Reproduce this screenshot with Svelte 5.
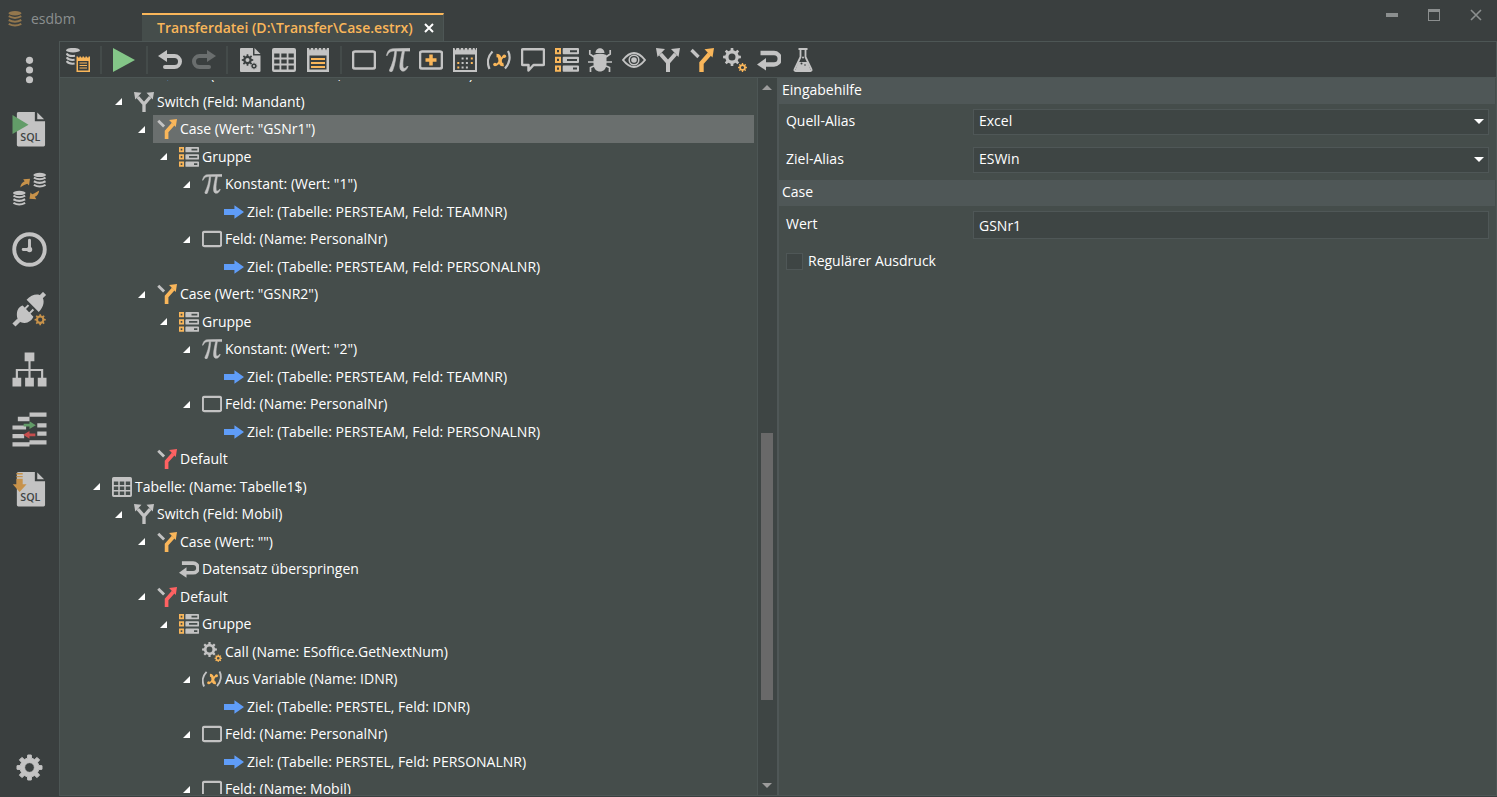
<script>
  // Outline of a cog wheel with a round hole, for evenodd filling
  function gear(cx, cy, outer, inner, hole, teeth = 8) {
    const step = (Math.PI * 2) / teeth;
    const at = (r, a) => `${(cx + r * Math.cos(a)).toFixed(2)} ${(cy + r * Math.sin(a)).toFixed(2)}`;
    const points = [];
    for (let i = 0; i < teeth; i++) {
      const a = i * step - Math.PI / 2;
      points.push(at(inner, a - step * 0.27), at(outer, a - step * 0.18), at(outer, a + step * 0.18), at(inner, a + step * 0.27));
    }
    return `M${points.join('L')}Z M${cx - hole} ${cy}a${hole} ${hole} 0 1 0 ${hole * 2} 0a${hole} ${hole} 0 1 0 ${-hole * 2} 0Z`;
  }

  const sidebar = [
    ['dots', 'Menü'],
    ['sqlrun', 'SQL ausführen'],
    ['dbsync', 'Datenbanken abgleichen'],
    ['clock', 'Zeitplan'],
    ['plug', 'Verbindungen'],
    ['tree', 'Struktur'],
    ['compare', 'Vergleich'],
    ['sqlload', 'SQL exportieren']
  ];

  const toolGroups = [
    [['dbnote', 'Transferdatei']],
    [['play', 'Starten']],
    [['undo', 'Rückgängig'], ['redo', 'Wiederholen']],
    [['script', 'Skript'], ['table', 'Tabelle'], ['note', 'Notiz']],
    [
      ['field', 'Feld'], ['pi', 'Konstant'], ['plus', 'Hinzufügen'], ['calendar', 'Datum'], ['variable', 'Variable'],
      ['comment', 'Kommentar'], ['group', 'Gruppe'], ['bug', 'Debug'], ['eye', 'Ansicht'], ['switch', 'Switch'],
      ['case', 'Case'], ['call', 'Call'], ['skip', 'Datensatz überspringen'], ['flask', 'Test']
    ]
  ];

  const nodes = [
    { d: 2, icon: 'target', text: 'Ziel: (Tabelle: PERSTEAM, Feld: PERSONALNR)' },
    { d: 1, icon: 'switch', text: 'Switch (Feld: Mandant)' },
    { d: 2, icon: 'case', text: 'Case (Wert: "GSNr1")' },
    { d: 3, icon: 'group', text: 'Gruppe' },
    { d: 4, icon: 'pi', text: 'Konstant: (Wert: "1")' },
    { d: 5, icon: 'target', text: 'Ziel: (Tabelle: PERSTEAM, Feld: TEAMNR)' },
    { d: 4, icon: 'field', text: 'Feld: (Name: PersonalNr)' },
    { d: 5, icon: 'target', text: 'Ziel: (Tabelle: PERSTEAM, Feld: PERSONALNR)' },
    { d: 2, icon: 'case', text: 'Case (Wert: "GSNR2")' },
    { d: 3, icon: 'group', text: 'Gruppe' },
    { d: 4, icon: 'pi', text: 'Konstant: (Wert: "2")' },
    { d: 5, icon: 'target', text: 'Ziel: (Tabelle: PERSTEAM, Feld: TEAMNR)' },
    { d: 4, icon: 'field', text: 'Feld: (Name: PersonalNr)' },
    { d: 5, icon: 'target', text: 'Ziel: (Tabelle: PERSTEAM, Feld: PERSONALNR)' },
    { d: 2, icon: 'default', text: 'Default' },
    { d: 0, icon: 'table', text: 'Tabelle: (Name: Tabelle1$)' },
    { d: 1, icon: 'switch', text: 'Switch (Feld: Mobil)' },
    { d: 2, icon: 'case', text: 'Case (Wert: "")' },
    { d: 3, icon: 'skip', text: 'Datensatz überspringen', leaf: true },
    { d: 2, icon: 'default', text: 'Default' },
    { d: 3, icon: 'group', text: 'Gruppe' },
    { d: 4, icon: 'call', text: 'Call (Name: ESoffice.GetNextNum)' },
    { d: 4, icon: 'variable', text: 'Aus Variable (Name: IDNR)' },
    { d: 5, icon: 'target', text: 'Ziel: (Tabelle: PERSTEL, Feld: IDNR)' },
    { d: 4, icon: 'field', text: 'Feld: (Name: PersonalNr)' },
    { d: 5, icon: 'target', text: 'Ziel: (Tabelle: PERSTEL, Feld: PERSONALNR)' },
    { d: 4, icon: 'field', text: 'Feld: (Name: Mobil)', parent: true }
  ];

  let selected = $state(2);
  let collapsed = $state({});
  let source = $state('Excel');
  let target = $state('ESWin');
  let value = $state('GSNr1');
  let regex = $state(false);

  const hasChildren = (i) => nodes[i].parent || (i + 1 < nodes.length && nodes[i + 1].d > nodes[i].d);

  const visible = $derived.by(() => {
    const out = [];
    let hide = Infinity;
    nodes.forEach((n, i) => {
      if (n.d > hide) return;
      hide = collapsed[i] ? n.d : Infinity;
      out.push({ ...n, i, parent: hasChildren(i) });
    });
    return out;
  });

  const indent = (d) => 31 + Math.floor(d * 22.5);
</script>

{#snippet icon(name)}
  <svg class="ic" viewBox="0 0 24 24" aria-hidden="true">
    {#if name === 'dbnote'}
      <ellipse class="g" cx="7" cy="2.2" rx="6.8" ry="2.3" />
      <path class="gs" stroke-width="2" d="M.6 5.5C2 8 6 8.300 9 7.800M.6 9.300c1.400 2.300 4 3 8 2.500M.6 13.100c1.400 2.300 4 3 8 2.500" />
      <path class="o" fill-rule="evenodd" d="M10.500 10V8.500h1.500v1h1.500v-1h1.500v1h1.500v-1H18v1h1.500v-1H21v1h1.500v-1H24V24H10.500ZM12 13v9.500h10.500V13Z" />
      <path class="os" stroke-width="1.200" d="M13.500 15H21M13.500 17.500H21M13.500 20H21" />
    {:else if name === 'play'}
      <path fill="#84c688" d="M1 0 23 12 1 24Z" />
    {:else if name === 'undo' || name === 'redo'}
      <g class:off={name === 'redo'} transform={name === 'redo' ? 'translate(24 0) scale(-1 1)' : undefined}>
        <path class="gs" stroke-width="4" d="M5 8h11.500a5.300 5.300 0 0 1 0 11H7" stroke-linecap="round" />
        <path class="g" d="M0 8 9 2v12Z" />
      </g>
    {:else if name === 'script'}
      <path class="g" d="M3 0h12v7.500h7.500V23q0 1-1 1H3q-1 0-1-1V1q0-1 1-1Z" />
      <path class="g" d="M16.500 0 22.500 6h-6Z" />
      <path fill="#3a3f3f" fill-rule="evenodd" d={gear(9.5, 12, 5.8, 4.3, 2)} />
      <path fill="#3a3f3f" fill-rule="evenodd" d={gear(16, 18, 3.2, 2.4, 1.1)} />
    {:else if name === 'table'}
      <path class="g" fill-rule="evenodd" d="M2 0h20q2 0 2 2v20q0 2-2 2H2q-2 0-2-2V2q0-2 2-2ZM2.200 5.500v4h5.300v-4ZM9.300 5.500v4h5.400v-4ZM16.500 5.500v4h5.300v-4ZM2.200 11.500v4h5.300v-4ZM9.300 11.500v4h5.400v-4ZM16.500 11.500v4h5.300v-4ZM2.200 17.500v4h5.300v-4ZM9.300 17.500v4h5.400v-4ZM16.500 17.500v4h5.300v-4Z" />
    {:else if name === 'note' || name === 'calendar'}
      <path class="g" fill-rule="evenodd" d={name === 'note' ? 'M1 24V0h2l1 2.500L5 0h2l1 2.500L9 0h2l1 2.500L13 0h2l1 2.500L17 0h2l1 2.500L21 0h2v24ZM3.500 7.500v14h17v-14Z' : 'M0 24V0h1.500l1 2.500 1-2.500H6l1 2.500L8 0h2l1 2.500L12 0h2l1 2.500L16 0h2l1 2.500L20 0h1.500l1 2.500L23 0h1v24ZM2 6.500v15.500h20V6.500Z'} />
      {#if name === 'note'}
        <path class="os" stroke-width="2" d="M5 11h14M5 15h14M5 19h14" />
      {:else}
        <path class="gs" stroke-width="2" stroke-dasharray="2 2.300" d="M8.600 10.500H17M8.600 15h8M8.600 19.500h8" />
        <path class="os" stroke-width="2" d="M4.300 15h2M4.300 19.500h2M17.800 15h2M17.800 10.500h2" />
      {/if}
    {:else if name === 'field' || name === 'plus'}
      <rect class="gs" x="1" y="3.500" width="22" height="17" rx="2" stroke-width="2.600" />
      {#if name === 'plus'}
        <path class="os" stroke-width="3.500" d="M12 6.500v11M6.500 12h11" />
      {/if}
    {:else if name === 'pi'}
      <path class="g" stroke="#c3c3c3" stroke-width=".6" d="M.5 7.500C1.700 2.500 3.500 1 7 .8L24 .3v2.800H18.500C17.500 9 16.500 14 17 18.500c.3 2.500 2 2.500 4.500-.5l.5.500C19.500 25 13.800 24.500 13.800 18.500c0-4 1.500-10 2.500-15.400H10.500C10 10 9 16.500 6.500 23c-1 1.500-3.500 1-3-1C6.500 16 8.200 10 8.800 3.100 5 3 2.800 4 1.300 7.500Z" />
    {:else if name === 'variable'}
      <path class="gs" stroke-width="2.200" d="M5.500 3.500C.8 8.500-.2 15 2.500 21M21 3c2.800 5 2 12-3 17.500" />
      <path class="os" stroke-width="3.400" d="M9.500 7.500c3 0 3.200 1.500 3.500 4.500.3 3.500 1 5 3.600 4.500" />
      <path class="os" stroke-width="2" d="M18.300 8c-4-1.300-5 8.500-9.800 9" />
      <circle class="o" cx="17.300" cy="8.200" r="1.800" /><circle class="o" cx="8" cy="16.500" r="1.800" />
    {:else if name === 'comment'}
      <path class="gs" stroke-width="2.500" stroke-linejoin="round" d="M2 1.300h20q1 0 1 1V16q0 1-1 1H12.500L7.500 22.500V17H2q-1 0-1-1V2.300q0-1 1-1Z" />
    {:else if name === 'group'}
      {#each [0, 8.7, 17.4] as y, n}
        <path class="o" fill-rule="evenodd" d="M0 {y}h6v6.300H0ZM2 {y + 2}v2.300h2v-2.300Z" />
        <path class="g" fill-rule="evenodd" d="M8.500 {y}h14.500q1 0 1 1v4.300q0 1-1 1H8.500q-.8 0-.8-1V{y + 1}q0-1 .8-1ZM{[15, 12, 18][n]} {y + 2.2}v2H22v-2Z" />
      {/each}
    {:else if name === 'bug'}
      <path class="g" d="M7.500 5C7.500-1.500 16.500-1.500 16.500 5ZM5.500 7q6.500-2.500 13 0v9c0 10-13 10-13 0Z" />
      <path class="gs" stroke-width="1.700" d="M6 9 1.800 6V2M6 14H0M6 18l-3.500 1.500V24M18 9l4.200-3V2M18 14h6M18 18l3.500 1.500V24" />
    {:else if name === 'eye'}
      <path class="gs" stroke-width="2" d="M1 12Q12-2 23 12 12 26 1 12Z" />
      <circle class="gs" cx="12" cy="12" r="4.800" stroke-width="1.500" />
      <circle class="g" cx="12" cy="12" r="2.800" />
    {:else if name === 'switch'}
      <path class="gs" stroke-width="4" d="M12 24v-9.500L4.500 6M12 14.500 19.500 6" />
      <path class="g" d="M0 0 9 1 1.500 9ZM24 0 15 1 22.500 9Z" />
    {:else if name === 'case' || name === 'default'}
      <path class="gs" stroke-width="3.400" d="M1.500 2 8.500 9" />
      <g class:red={name === 'default'}>
        <path class="os" stroke-width="4.400" d="M11.500 24v-9L19.500 6" />
        <path class="o" d="M24 0 14.500 1.300 22.500 9.500Z" />
      </g>
    {:else if name === 'call'}
      <path class="g" fill-rule="evenodd" d={gear(9, 9, 9, 6.8, 3.5)} />
      <path class="o" fill-rule="evenodd" d={gear(19.5, 19.5, 4.5, 3.4, 1.6)} />
    {:else if name === 'skip'}
      <path class="gs" stroke-width="4.400" d="M3.500 5h13.500a4.800 4.800 0 0 1 0 11.500H7" />
      <path class="g" d="M0 16.500 9 10v12.500Z" />
    {:else if name === 'flask'}
      <path class="gs" stroke-width="1.800" stroke-linejoin="round" d="M7.500 1h9M9.500 1v8L3.500 21.500q-.5 1.500 1 1.500h15q1.500 0 1-1.500L14.500 9V1" />
      <path class="g" d="M7.500 14h9L20 23H4Z" />
      <circle cx="10.500" cy="15.500" r="1" fill="#3a3f3f" /><circle cx="13.500" cy="13" r="1" fill="#3a3f3f" /><circle cx="14" cy="17" r=".8" fill="#3a3f3f" />
      <circle class="g" cx="12" cy="9.500" r="1" />
    {:else if name === 'target'}
      <path fill="#5f9df9" d="M0 8.500h12.500V4L24 12 12.500 20v-4.500H0Z" />
    {/if}
  </svg>
{/snippet}

{#snippet disks(x, y)}
  <ellipse class="g" cx={x + 6.5} cy={y + 2} rx="6.500" ry="2.200" />
  <path class="gs" stroke-width="2.200" d="M{x + 0.5} {y + 4.8}q6 3.400 12 0M{x + 0.5} {y + 8.5}q6 3.400 12 0M{x + 0.5} {y + 12.200}q6 3.400 12 0" />
{/snippet}

{#snippet sheet()}
  <path class="g" d="M7 0h16.500v9.500H34V34q0 1.500-1.500 1.500h-26Q5 35.500 5 34V1.500Q5 0 7 0Z" />
  <path class="g" d="M26 0.500 33 7.500h-7Z" />
  <text x="8.500" y="30" class="sql">SQL</text>
{/snippet}

{#snippet bigIcon(name)}
  <svg class="big" viewBox="0 0 36 36" aria-hidden="true">
    {#if name === 'dots'}
      <circle class="g" cx="18" cy="7.500" r="3.700" /><circle class="g" cx="18" cy="17.500" r="3.700" /><circle class="g" cx="18" cy="27.500" r="3.700" />
    {:else if name === 'sqlrun'}
      {@render sheet()}
      <path fill="#629c68" d="M.5 3 17 13 .5 22.500Z" />
    {:else if name === 'sqlload'}
      {@render sheet()}
      <path fill="#c7924a" d="M4.500 1H11v1.500H4.500ZM4.500 4H11v1.500H4.500ZM4.500 7H11v5.500h4L7.800 20.500.8 12.500h3.700Z" />
    {:else if name === 'dbsync'}
      {@render disks(22, 1)}
      {@render disks(1, 19.5)}
      <path fill="#c7924a" d="M8.500 16C9 12.500 10.500 10.500 13 9.500L11.500 7.500 18.500 7l-1 7-1.800-2C13 13 11 14 8.500 16ZM28 19c-.5 3.500-2 5.500-4.500 6.500l1.500 2.500-7-.5 1-6.500 1.800 1.800C23.500 22 25.500 20.500 28 19Z" />
    {:else if name === 'clock'}
      <circle class="gs" cx="18" cy="18" r="15.700" stroke-width="4" />
      <circle class="g" cx="18" cy="18" r="2.800" />
      <path class="gs" stroke-width="3" stroke-linecap="round" d="M18 8.500V18h-6.500" />
    {:else if name === 'plug'}
      <path class="gs" stroke-width="4.500" d="M2 34 7 29M28 7l5.500-5.500" />
      <path class="g" d="M5 23C5 17 9 14.500 11 14L22 25.500C20 30 15 33.500 9 31 5.500 29.500 5 26 5 23ZM15 8C20 2.500 27 1 30.500 4.500S33 15 27.500 20.500Z" />
      <path class="gs" stroke-width="2" d="M12 18.500 17 13.500M17 23 22 18" />
      <path fill="#c7924a" fill-rule="evenodd" d={gear(29, 28.5, 5.8, 4.4, 2.2)} />
    {:else if name === 'tree'}
      <path class="gs" stroke-width="2.200" d="M18 8v20M5 28V18.500h26V28" />
      <path class="g" d="M13 .5h10v9H13ZM.5 26.500h9v9h-9ZM13.500 26.500h9v9h-9ZM26.500 26.500h9v9h-9Z" />
    {:else if name === 'compare'}
      <path class="g" d="M18 .5h17.500v4.500H18ZM6 5h12v4.500H6ZM26 11.500h9.500V16H26ZM.5 14h14v4H.5ZM26 20h9.500v4.500H26ZM.5 22.500h12V27H.5ZM18 29h17.500v4.500H18ZM.5 31H18v4.500H.5Z" />
      <path fill="#629c68" d="M12 12h6V9.500l6.500 4L18 17.500V15h-6Z" />
      <path fill="#c54d4d" d="M24 22h-6v-2.500l-6.500 4 6.500 4V25h6Z" />
    {:else if name === 'settings'}
      <path class="g" fill-rule="evenodd" d={gear(18, 18, 13, 9.8, 5)} stroke="#c3c3c3" stroke-linejoin="round" />
    {/if}
  </svg>
{/snippet}

<div class="app">
  <header class="titlebar">
    <div class="brand">
      <svg width="14" height="16" viewBox="0 0 14 16" aria-hidden="true">
        <ellipse cx="7" cy="2.200" rx="6.500" ry="2.200" fill="#93774d" />
        <path fill="none" stroke="#93774d" stroke-width="2" d="M.7 5.200q6.300 3.400 12.600 0M.7 9q6.300 3.400 12.600 0M.7 12.800q6.300 3.400 12.600 0" />
      </svg>
      <span>esdbm</span>
    </div>
    <div class="tab">
      <span>Transferdatei (D:\Transfer\Case.estrx)</span>
      <button aria-label="Tab schließen">
        <svg width="10" height="10" viewBox="0 0 10 10"><path d="M1 1l8 8M9 1 1 9" stroke="#fff" stroke-width="2" /></svg>
      </button>
    </div>
    <div class="window-buttons">
      <button aria-label="Minimieren"><svg viewBox="0 0 12 12"><path d="M0 4h12v4H0Z" fill="#8b8f8f" /></svg></button>
      <button aria-label="Maximieren"><svg viewBox="0 0 12 12"><path d="M0 0h12v12H0ZM1 3v8h10V3Z" fill="#8b8f8f" fill-rule="evenodd" /></svg></button>
      <button aria-label="Schließen"><svg viewBox="0 0 12 12"><path d="M1 1l10 10M11 1 1 11" stroke="#8b8f8f" stroke-width="1.600" /></svg></button>
    </div>
  </header>

  <nav class="sidebar" aria-label="Module">
    {#each sidebar as [name, label]}
      <button class:menu={name === 'dots'} aria-label={label}>{@render bigIcon(name)}</button>
    {/each}
    <button class="settings" aria-label="Einstellungen">{@render bigIcon('settings')}</button>
  </nav>

  <main>
    <div class="toolbar" role="toolbar" aria-label="Werkzeuge">
      {#each toolGroups as group, g}
        {#if g > 0}<span class="sep"></span>{/if}
        <div class="tools" class:wide={group.length > 10}>
          {#each group as [name, label]}
            <button aria-label={label} disabled={name === 'redo'}>{@render icon(name)}</button>
          {/each}
        </div>
      {/each}
    </div>

    <div class="panes">
      <div class="tree-pane">
        <ul class="nodes">
          {#each visible as n (n.i)}
            <li style="padding-left: {indent(n.d)}px">
              {#if n.parent}
                <button class="toggle" class:closed={collapsed[n.i]} aria-label="Auf- oder zuklappen" aria-expanded={!collapsed[n.i]} onclick={() => (collapsed[n.i] = !collapsed[n.i])}>
                  <svg width="7" height="7" viewBox="0 0 7 7"><path d="M7 0v7H0Z" fill="#fff" /></svg>
                </button>
              {:else}
                <span class="toggle"></span>
              {/if}
              <button class="node" class:selected={selected === n.i} onclick={() => (selected = n.i)}>
                {@render icon(n.icon)}
                <span>{n.text}</span>
              </button>
            </li>
          {/each}
        </ul>
      </div>

      <div class="scrollbar" aria-hidden="true">
        <svg width="10" height="5" viewBox="0 0 10 5"><path d="M0 5 5 0l5 5Z" fill="#9c9c9c" /></svg>
        <div class="track"><div class="thumb"></div></div>
        <svg width="10" height="5" viewBox="0 0 10 5"><path d="M0 0h10L5 5Z" fill="#9c9c9c" /></svg>
      </div>

      <form class="details">
        <h2>Eingabehilfe</h2>
        <div class="fields">
          <label for="source">Quell-Alias</label>
          <div class="select">
            <select id="source" bind:value={source}><option>Excel</option><option>ESWin</option></select>
          </div>
          <label for="target">Ziel-Alias</label>
          <div class="select">
            <select id="target" bind:value={target}><option>ESWin</option><option>Excel</option></select>
          </div>
        </div>
        <h2>Case</h2>
        <div class="fields">
          <label for="value">Wert</label>
          <input id="value" type="text" bind:value />
          <label class="check"><input type="checkbox" bind:checked={regex} />Regulärer Ausdruck</label>
        </div>
      </form>
    </div>
  </main>
</div>

<style>
  :global(body) {
    margin: 0;
    background: #3a3f3f;
  }
  .app {
    display: grid;
    grid-template: 41px minmax(0, 1fr) / 59px minmax(0, 1fr);
    height: 100vh;
    overflow: hidden;
    color: #fff;
    background: #3a3f3f;
    font: 14px/20px 'Segoe UI', 'Open Sans', 'Noto Sans', sans-serif;
  }
  button {
    display: flex;
    align-items: center;
    justify-content: center;
    margin: 0;
    padding: 0;
    border: 0;
    background: none;
    color: inherit;
    font: inherit;
  }
  svg {
    display: block;
    flex: none;
  }
  .g { fill: #c3c3c3; }
  .gs { fill: none; stroke: #c3c3c3; }
  .o { fill: #f9b65a; }
  .os { fill: none; stroke: #f9b65a; }
  .off .g { fill: #6a6e6e; }
  .off .gs { stroke: #6a6e6e; }
  .red .o { fill: #ff6262; }
  .red .os { stroke: #ff6262; }
  .sql {
    font: 600 11px 'Open Sans', sans-serif;
    fill: #3f4444;
  }

  .titlebar {
    grid-column: 1 / -1;
    display: flex;
    align-items: flex-end;
  }
  .brand {
    display: flex;
    align-items: center;
    gap: 9px;
    box-sizing: border-box;
    width: 142px;
    height: 41px;
    padding: 0 0 3px 8px;
    color: #8b8f8f;
  }
  .tab {
    display: flex;
    align-items: center;
    gap: 11px;
    box-sizing: border-box;
    height: 28px;
    padding: 0 9px 0 15px;
    border-top: 2px solid #f9b65a;
    border-right: 1px solid #4d5655;
    background: #454d4b;
    color: #f9b65a;
    font-weight: 600;
  }
  .window-buttons {
    display: flex;
    align-self: flex-start;
    margin-left: auto;
  }
  .window-buttons button {
    width: 42px;
    height: 30px;
  }
  .window-buttons svg {
    width: 12px;
    height: 12px;
  }

  .sidebar {
    display: flex;
    flex-direction: column;
  }
  .sidebar button {
    flex: none;
    width: 59px;
    height: 60px;
  }
  .sidebar .menu {
    height: 58px;
  }
  .sidebar .settings {
    margin-top: auto;
  }
  .big {
    width: 35px;
    height: 35px;
  }

  main {
    display: flex;
    flex-direction: column;
    min-width: 0;
    min-height: 0;
    margin-bottom: 1px;
    border: 1px solid #4d5655;
  }
  .toolbar {
    display: flex;
    align-items: center;
    flex: none;
    height: 35px;
    padding-left: 1px;
    border-bottom: 1px solid #4d5655;
  }
  .tools {
    display: flex;
  }
  .tools button {
    width: 34px;
    height: 34px;
  }
  .tools.wide {
    width: 473px;
  }
  .tools.wide button {
    flex: 1;
  }
  .tools .ic {
    width: 24px;
    height: 24px;
  }
  .sep {
    width: 2px;
    height: 28px;
    margin: 0 5px;
    background: #444b4a;
  }

  .panes {
    flex: 1;
    display: grid;
    grid-template-columns: minmax(0, 696fr) 20px minmax(0, 718fr);
    min-height: 0;
    background: #454d4b;
  }
  .tree-pane {
    min-width: 0;
    margin: 2px 3px 1px 1px;
    overflow: hidden;
  }
  .nodes {
    display: grid;
    grid-auto-rows: 28px 27px;
    margin: -20px 0 0;
    padding: 0;
    list-style: none;
  }
  li {
    display: flex;
    min-width: 0;
  }
  .toggle {
    flex: none;
    justify-content: flex-start;
    width: 16px;
    padding-left: 1px;
    box-sizing: border-box;
  }
  .closed svg {
    transform: rotate(-45deg);
  }
  .node {
    flex: 1;
    justify-content: flex-start;
    gap: 3px;
    min-width: 0;
    padding-left: 4px;
    white-space: nowrap;
  }
  .node .ic {
    width: 20px;
    height: 20px;
  }
  .selected {
    background: #6a6f6e;
  }

  .scrollbar {
    display: flex;
    flex-direction: column;
    align-items: center;
    box-sizing: border-box;
    padding: 7px 0;
    border-left: 1px solid #4d5655;
    background: #3e4544;
  }
  .track {
    flex: 1;
    display: grid;
    grid-template-rows: 341fr 265fr 83fr;
    width: 12px;
  }
  .thumb {
    grid-row: 2;
    background: #696969;
  }

  .details {
    border-left: 2px solid #4f5757;
    padding-right: 1px;
  }
  h2 {
    margin: 0;
    padding: 2px 3px 4px;
    background: #4f5757;
    font-size: 14px;
    font-weight: 400;
    line-height: 20px;
  }
  .fields {
    display: grid;
    grid-template-columns: 187px minmax(0, 1fr);
    align-items: center;
    row-gap: 12px;
    padding: 5px 6px 7px 7px;
  }
  label[for] {
    padding-bottom: 2px;
  }
  .select {
    position: relative;
  }
  .select::after {
    content: '';
    position: absolute;
    top: 10px;
    right: 5px;
    border: 5px solid transparent;
    border-top-color: #fff;
    border-bottom: 0;
    pointer-events: none;
  }
  select,
  input[type='text'] {
    display: block;
    box-sizing: border-box;
    width: 100%;
    height: 26px;
    margin: 0;
    padding: 0 5px 2px;
    appearance: none;
    border: 1px solid #4f5757;
    border-radius: 0;
    background: #3e4544;
    color: #fff;
    font: inherit;
  }
  input[type='text'] {
    height: 28px;
    padding: 1px 5px 0;
  }
  .check {
    grid-column: 1 / -1;
    display: flex;
    align-items: center;
    gap: 5px;
  }
  .check input {
    appearance: none;
    box-sizing: border-box;
    width: 17px;
    height: 17px;
    margin: 0;
    border: 1px solid #4f5757;
    background: #3e4544;
  }
  .check input:checked {
    background: #f9b65a;
  }
</style>
